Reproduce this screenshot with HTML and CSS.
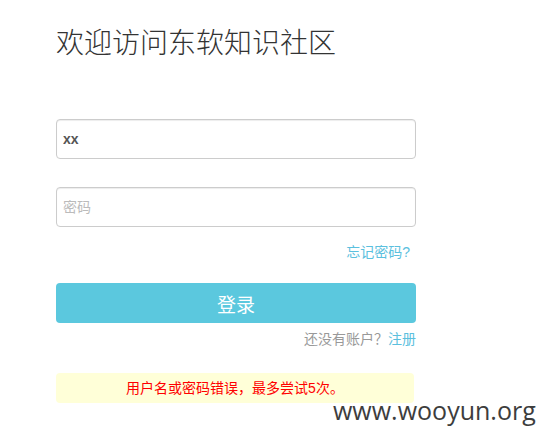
FILE: index.html
```html
<!DOCTYPE html>
<html lang="zh-CN">
<head>
    <meta charset="UTF-8">
    <meta name="viewport" content="width=device-width, initial-scale=1.0">
    <title>欢迎访问东软知识社区</title>
    <link rel="stylesheet" href="styles.css">
</head>
<body>
    <div class="login-box">
        <h1 class="login-title">欢迎访问东软知识社区</h1>
        <form id="login-form">
            <div class="form-group">
                <input type="text" class="form-input form-input-bold" value="xx" />
            </div>
            <div class="form-group">
                <input type="password" class="form-input" placeholder="密码" />
            </div>
            <div class="forgot"><a href="#" class="link">忘记密码?</a></div>
            <button type="submit" class="login-button">登录</button>
            <div class="register">还没有账户？<a href="#" class="link">注册</a></div>
            <div class="alert">用户名或密码错误，最多尝试5次。</div>
        </form>
    </div>
    <div class="watermark">www.wooyun.org</div>
</body>
</html>
```

FILE: styles.css
```css
* {
    margin: 0;
    padding: 0;
    box-sizing: border-box;
}
body {
    background: #fff;
    color: #333;
    font-family: 'Liberation Sans', 'Noto Sans CJK SC', sans-serif;
    width: 538px;
    height: 440px;
    position: relative;
    overflow: hidden;
}
.login-box {
    width: 360px;
    margin-left: 56px;
    padding-top: 26px;
}
.login-title {
    font-size: 28px;
    font-weight: 300;
    line-height: 36px;
    color: #333;
    margin-bottom: 57px;
}
.form-group {
    margin-bottom: 28px;
}
.form-input {
    display: block;
    width: 100%;
    height: 40px;
    padding: 0 6px;
    font-size: 14px;
    font-family: inherit;
    color: #555;
    border: 1px solid #ccc;
    border-radius: 4px;
    box-shadow: inset 0 1px 1px rgba(0, 0, 0, 0.075);
    outline: none;
}
.form-input-bold {
    font-weight: bold;
}
.form-input::placeholder {
    color: #bbb;
}
.forgot {
    text-align: right;
    font-size: 14px;
    line-height: 18px;
    margin-top: -12px;
    padding-right: 6px;
    margin-bottom: 22px;
}
.link {
    color: #5bc0de;
    text-decoration: none;
}
.login-button {
    display: block;
    width: 100%;
    height: 40px;
    background: #5bc8de;
    color: #fff;
    border: none;
    border-radius: 4px;
    font-size: 19px;
    font-family: inherit;
    cursor: pointer;
}
.register {
    text-align: right;
    font-size: 14px;
    line-height: 18px;
    color: #999;
    margin-top: 7px;
    margin-bottom: 25px;
}
.alert {
    width: 358px;
    height: 30px;
    line-height: 30px;
    background: #ffffd8;
    color: #f00;
    font-size: 14px;
    text-align: center;
    border-radius: 4px;
}
.watermark {
    position: absolute;
    left: 333px;
    top: 393px;
    font-size: 25px;
    line-height: 34px;
    color: #3d3d3d;
    font-family: 'Open Sans', sans-serif;
}
```
